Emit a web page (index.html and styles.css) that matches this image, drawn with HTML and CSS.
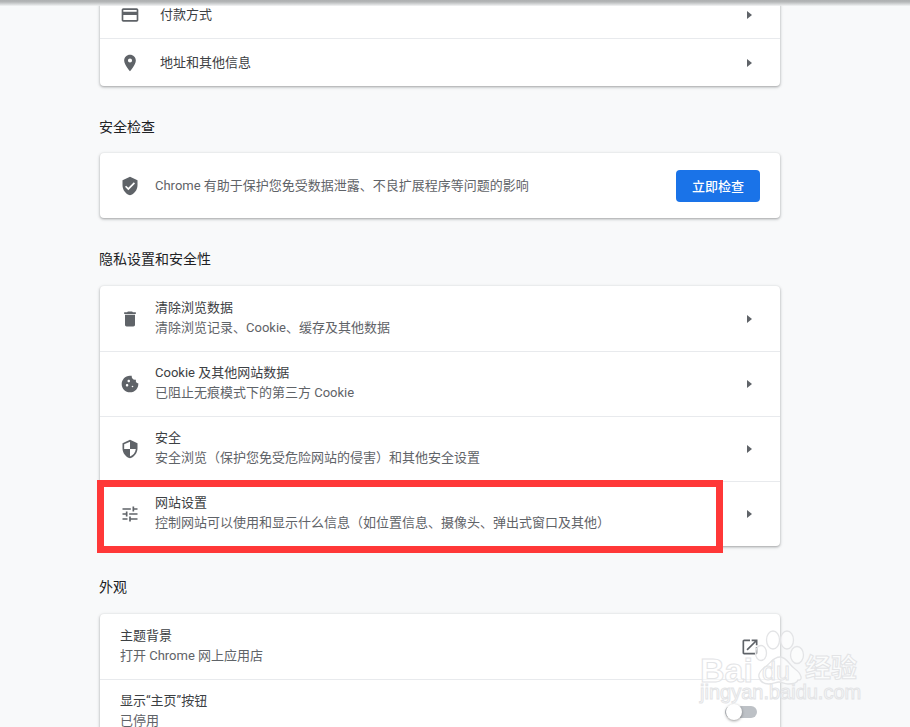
FILE: index.html
```html
<!DOCTYPE html>
<html lang="zh-CN">
<head>
<meta charset="utf-8">
<title>设置</title>
<link rel="stylesheet" href="styles.css">
</head>
<body>
<div class="top-shadow"></div>
<main class="page">
  <section class="card first">
    <div class="row short wide-gap"><svg class="icon" viewBox="0 0 24 24"><path d="M20 4H4c-1.11 0-1.99.89-1.99 2L2 18c0 1.11.89 2 2 2h16c1.11 0 2-.89 2-2V6c0-1.11-.89-2-2-2zm0 14H4v-6h16v6zm0-10H4V6h16v2z"/></svg><div class="text"><div class="label">付款方式</div></div><span class="arrow"></span></div>
    <div class="row short last wide-gap sep"><svg class="icon" viewBox="0 0 24 24"><path d="M12 2C8.13 2 5 5.13 5 9c0 5.25 7 13 7 13s7-7.75 7-13c0-3.87-3.13-7-7-7zm0 9.5a2.5 2.5 0 0 1 0-5 2.5 2.5 0 0 1 0 5z"/></svg><div class="text"><div class="label">地址和其他信息</div></div><span class="arrow"></span></div>
  </section>

  <h2 class="title tight">安全检查</h2>
  <section class="card">
    <div class="row"><svg class="icon" viewBox="0 0 24 24"><path d="M12 1L3 5v6c0 5.55 3.84 10.74 9 12 5.16-1.26 9-6.45 9-12V5l-9-4zm-2 16l-4-4 1.41-1.41L10 14.17l6.59-6.59L18 9l-8 8z"/></svg><div class="text"><div class="sub">Chrome 有助于保护您免受数据泄露、不良扩展程序等问题的影响</div></div><button class="btn">立即检查</button></div>
  </section>

  <h2 class="title">隐私设置和安全性</h2>
  <section class="card">
    <div class="row"><svg class="icon" viewBox="0 0 24 24"><path d="M6 19c0 1.1.9 2 2 2h8c1.1 0 2-.9 2-2V7H6v12zM19 4h-3.5l-1-1h-5l-1 1H5v2h14V4z"/></svg><div class="text two"><div class="label">清除浏览数据</div><div class="sub">清除浏览记录、Cookie、缓存及其他数据</div></div><span class="arrow"></span></div>
    <div class="row sep"><svg class="icon" viewBox="0 0 24 24"><path d="M21.95 10.99c-1.79-.03-3.7-1.95-2.68-4.22-2.97 1-5.78-1.59-5.19-4.56C7.11.74 2 6.41 2 12c0 5.52 4.48 10 10 10 5.89 0 10.54-5.08 9.95-11.01zM8.5 15c-.83 0-1.5-.67-1.5-1.5S7.67 12 8.5 12s1.5.67 1.5 1.5S9.33 15 8.5 15zm2-5C9.67 10 9 9.33 9 8.5S9.67 7 10.5 7s1.5.67 1.5 1.5-.67 1.5-1.5 1.5zm4.5 6c-.55 0-1-.45-1-1s.45-1 1-1 1 .45 1 1-.45 1-1 1z"/></svg><div class="text two"><div class="label">Cookie 及其他网站数据</div><div class="sub">已阻止无痕模式下的第三方 Cookie</div></div><span class="arrow"></span></div>
    <div class="row sep"><svg class="icon" viewBox="0 0 24 24"><path d="M12 1L3 5v6c0 5.55 3.84 10.74 9 12 5.16-1.26 9-6.45 9-12V5l-9-4zm0 10.99h7c-.53 4.12-3.28 7.79-7 8.94V12H5V6.3l7-3.11v8.8z"/></svg><div class="text two"><div class="label">安全</div><div class="sub">安全浏览（保护您免受危险网站的侵害）和其他安全设置</div></div><span class="arrow"></span></div>
    <div class="row sep"><svg class="icon" viewBox="0 0 24 24"><path d="M3 17v2h6v-2H3zM3 5v2h10V5H3zm10 16v-2h8v-2h-8v-2h-2v6h2zM7 9v2H3v2h4v2h2V9H7zm14 4v-2H11v2h10zm-6-4h2V7h4V5h-4V3h-2v6z"/></svg><div class="text two"><div class="label">网站设置</div><div class="sub">控制网站可以使用和显示什么信息（如位置信息、摄像头、弹出式窗口及其他）</div></div><span class="arrow"></span></div>
  </section>

  <h2 class="title">外观</h2>
  <section class="card">
    <div class="row plain"><div class="text two"><div class="label">主题背景</div><div class="sub">打开 Chrome 网上应用店</div></div><svg class="icon" viewBox="0 0 24 24"><path d="M19 19H5V5h7V3H5c-1.11 0-2 .9-2 2v14c0 1.1.89 2 2 2h14c1.1 0 2-.9 2-2v-7h-2v7zM14 3v2h3.59l-9.83 9.83 1.41 1.41L19 6.41V10h2V3h-7z"/></svg></div>
    <div class="row plain sep"><div class="text two"><div class="label">显示“主页”按钮</div><div class="sub">已停用</div></div><span class="toggle"><span class="knob"></span></span></div>
  </section>
</main>
<div class="highlight"></div>
<div class="watermark">
  <svg class="paw" viewBox="0 0 70 65"><g fill="rgba(255,255,255,.45)" stroke="#e3e4e6" stroke-width="1.3"><ellipse cx="33" cy="15" rx="6.5" ry="9"/><ellipse cx="47" cy="15" rx="6.5" ry="9"/><ellipse cx="57" cy="30" rx="6.5" ry="8.5"/><ellipse cx="21" cy="28" rx="5.5" ry="7.5"/><path d="M40 32c7 0 9 8 15 12 7 5 8 12 3 11-1 3-5 4-10 4-4 0-6-2-9-2s-6 2-10 2c-6 0-9-3-10-7-1-4 2-7 6-10 6-4 8-10 15-10z"/></g></svg>
  <span class="wm-bai">Bai</span><span class="wm-du">du</span><span class="wm-cn">经验</span>
  <span class="wm-url">jingyan.baidu.com</span>
</div>
</body>
</html>
```
FILE: styles.css
```css
* { box-sizing: border-box; }
html, body { margin: 0; height: 727px; overflow: hidden; }
body {
  position: relative;
  background: #f8f9fa;
  color: #202124;
  font-family: Roboto, "Noto Sans CJK SC", sans-serif;
  font-size: 13px;
}
.page {
  width: 680px;
  margin: -9px 0 0 100px;
  display: flex;
  flex-direction: column;
}
.card {
  background: #fff;
  border-radius: 4px;
  box-shadow: 0 1px 2px rgba(60,64,67,.3), 0 1px 3px 1px rgba(60,64,67,.15);
}
.title {
  margin: 31px 0 0 -1px;
  height: 37px;
  font-size: 14px;
  font-weight: 400;
  line-height: 20px;
}
.title.tight { height: 36px; }
.row {
  display: flex;
  align-items: center;
  height: 65px;
  padding: 0 20px;
}
.row.short { height: 47px; }
.row.short.last { height: 48px; }
.row.sep { border-top: 1px solid #e8eaed; }
.icon { width: 20px; height: 20px; flex: none; fill: #5f6368; }
.text { flex: 1; margin-left: 15px; min-width: 0; line-height: 20px; }
.text.two { margin-top: -2px; }
.wide-gap .text { margin-left: 20px; }
.plain .text { margin-left: 0; }
.label { color: #3c4043; }
.sub { color: #5f6368; }
.arrow {
  width: 0; height: 0;
  margin-right: 8px;
  border-left: 5px solid #5f6368;
  border-top: 4px solid transparent;
  border-bottom: 4px solid transparent;
}
.btn {
  width: 84px; height: 32px;
  border: 0;
  border-radius: 4px;
  background: #1a73e8;
  color: #fff;
  font: inherit;
  font-weight: 500;
}
.toggle {
  position: relative;
  width: 32px; height: 12px;
  border-radius: 6px;
  background: #bdc1c6;
  margin-right: 3px;
}
.knob {
  position: absolute;
  left: 1px; top: -2px;
  width: 16px; height: 16px;
  border-radius: 50%;
  background: #fff;
  box-shadow: 0 1px 3px rgba(0,0,0,.4);
}
.top-shadow {
  position: absolute;
  left: 0; right: 0; top: 0;
  height: 6px;
  z-index: 3;
  background: linear-gradient(#aeb0b1, #b4b6b7 30%, #d6d8d9 70%, rgba(240,241,242,.7));
}
.highlight {
  position: absolute;
  left: 97px; top: 480px;
  width: 626px; height: 73px;
  border: 7px solid #ff3838;
  z-index: 4;
}
.watermark {
  position: absolute;
  left: 697px; top: 625px;
  width: 170px; height: 85px;
  z-index: 5;
  color: rgba(255,255,255,.55);
  -webkit-text-stroke: 1px #e3e4e6;
  font-family: "Liberation Sans", "Noto Sans CJK SC", sans-serif;
}
.watermark span { position: absolute; }
.paw { position: absolute; left: 43px; top: 0; width: 70px; height: 65px; }
.wm-bai { left: 3px; top: 32px; font-size: 34px; line-height: 26px; font-weight: 700; }
.wm-du { left: 65px; top: 36px; font-size: 25px; line-height: 20px; }
.wm-cn { left: 108px; top: 30px; font-size: 26px; line-height: 26px; font-weight: 700; }
.wm-url { left: 3px; top: 58px; font-size: 20px; line-height: 18px; }
```
